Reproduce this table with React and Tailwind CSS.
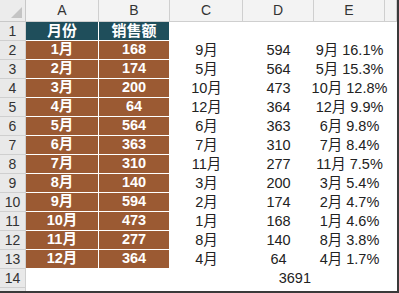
import React from "react";

const data = [
  ["1月", "168", "9月", "594", "9月 16.1%"],
  ["2月", "174", "5月", "564", "5月 15.3%"],
  ["3月", "200", "10月", "473", "10月 12.8%"],
  ["4月", "64", "12月", "364", "12月 9.9%"],
  ["5月", "564", "6月", "363", "6月 9.8%"],
  ["6月", "363", "7月", "310", "7月 8.4%"],
  ["7月", "310", "11月", "277", "11月 7.5%"],
  ["8月", "140", "3月", "200", "3月 5.4%"],
  ["9月", "594", "2月", "174", "2月 4.7%"],
  ["10月", "473", "1月", "168", "1月 4.6%"],
  ["11月", "277", "8月", "140", "8月 3.8%"],
  ["12月", "364", "4月", "64", "4月 1.7%"],
];

const font = { fontFamily: '"Liberation Sans", "Noto Sans CJK SC", Arial, sans-serif' };

function RowNum({ n, h = "h-[19px]" }) {
  return (
    <div className={`${h} flex items-center justify-center bg-[#e9e9e9] border-r border-b border-[#cfcfcf] text-[14px] text-[#333]`}>
      {n}
    </div>
  );
}

export default function App() {
  return (
    <div
      className="w-[399px] h-[293px] overflow-hidden bg-white border-r-2 border-b-2 border-[#3a3a3a]"
      style={font}
    >
      <div className="grid grid-cols-[26px_73px_71px_73px_71px_71px_12px]">
        {/* column header row */}
        <div className="h-[22px] bg-[#ececec] border-r border-b border-[#c8c8c8] relative">
          <div className="absolute right-[3px] bottom-[3px] w-0 h-0 border-l-[11px] border-l-transparent border-b-[11px] border-b-[#c4c4c4]" />
        </div>
        {["A", "B", "C", "D", "E", ""].map((c, i) => (
          <div
            key={i}
            className="h-[22px] flex items-center justify-center bg-[#f3f3f3] border-r border-b border-[#cfcfcf] text-[14px] text-[#333]"
          >
            {c}
          </div>
        ))}

        {/* row 1 */}
        <RowNum n={1} />
        <div className="h-[19px] flex items-center justify-center bg-[#1f4e5b] border-r border-b border-white text-white font-bold text-[15px]">
          月份
        </div>
        <div className="h-[19px] flex items-center justify-center bg-[#1f4e5b] border-r border-b border-white text-white font-bold text-[15px]">
          销售额
        </div>
        <div className="h-[19px]" />
        <div className="h-[19px]" />
        <div className="h-[19px]" />
        <div className="h-[19px]" />

        {data.map((r, i) => (
          <React.Fragment key={i}>
            <RowNum n={i + 2} />
            <div className="h-[19px] flex items-center justify-center bg-[#9b5a33] border-r border-b border-white text-white font-bold text-[14.5px]">
              {r[0]}
            </div>
            <div className="h-[19px] flex items-center justify-center bg-[#9b5a33] border-r border-b border-white text-white font-bold text-[14.5px]">
              {r[1]}
            </div>
            <div className="h-[19px] flex items-center justify-center text-[14.5px] text-[#222]">
              {r[2]}
            </div>
            <div className="h-[19px] flex items-center justify-center text-[14.5px] text-[#222]">
              {r[3]}
            </div>
            <div className="h-[19px] flex items-center justify-center whitespace-nowrap text-[14.5px] text-[#222]">
              {r[4]}
            </div>
            <div className="h-[19px]" />
          </React.Fragment>
        ))}

        {/* row 14 */}
        <RowNum n={14} />
        <div className="h-[19px]" />
        <div className="h-[19px]" />
        <div className="h-[19px]" />
        <div className="h-[19px] flex items-center justify-end pr-[3px] text-[14.5px] text-[#222]">
          3691
        </div>
        <div className="h-[19px]" />
        <div className="h-[19px]" />

        {/* partial row 15 */}
        <div className="h-[19px] bg-[#e9e9e9] border-r border-[#cfcfcf]" />
      </div>
    </div>
  );
}
